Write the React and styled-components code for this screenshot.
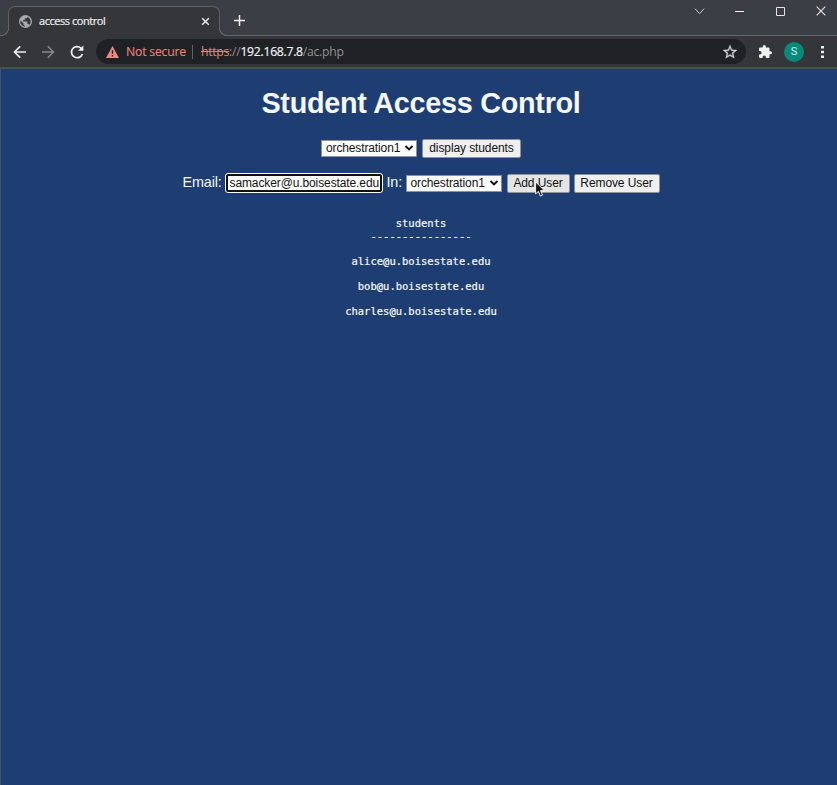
import React from "react";
import styled, { createGlobalStyle } from "styled-components";

const Global = createGlobalStyle`
  * { box-sizing: border-box; }
  body { margin: 0; background: #1e3e73; overflow: hidden; }
`;

const Window = styled.div`
  width: 837px;
  height: 785px;
  display: flex;
  flex-direction: column;
  background: #1e3e73;
  border-left: 1px solid #43546f;
  font-family: "Liberation Sans", Arial, sans-serif;
`;

const TabStrip = styled.div`
  height: 36px;
  flex: none;
  display: flex;
  align-items: flex-end;
  margin-left: -1px;
  padding-left: 8px;
  background: #3b3e45;
  box-shadow: inset 0 -1px #63666b;
`;

const Tab = styled.div`
  position: relative;
  width: 212px;
  height: 30px;
  display: flex;
  align-items: center;
  padding: 0 9px 1px 10px;
  background: #35363a;
  border: 1px solid #5e6166;
  border-bottom: 0;
  border-radius: 7px 7px 0 0;
  &::before, &::after {
    content: "";
    position: absolute;
    bottom: 0;
    width: 8px;
    height: 8px;
  }
  &::before {
    left: -8px;
    background: radial-gradient(circle at 0 0, #3b3e45 6.7px, #63666b 7.2px 7.8px, #35363a 8.3px);
  }
  &::after {
    right: -8px;
    background: radial-gradient(circle at 100% 0, #3b3e45 6.7px, #63666b 7.2px 7.8px, #35363a 8.3px);
  }
`;

const TabTitle = styled.span`
  flex: 1;
  margin-left: 7px;
  font: 11px/16px "Open Sans", sans-serif;
  letter-spacing: -0.45px;
  color: #eeeff1;
  -webkit-text-stroke: 0.2px;
`;

const Glyph = styled.svg`
  display: block;
  flex: none;
  width: ${(p) => p.$w}px;
  height: ${(p) => p.$h || p.$w}px;
  margin-left: ${(p) => p.$ml || 0}px;
  overflow: visible;
`;

const NewTab = styled.div`
  width: 40px;
  height: 36px;
  padding: 15px 0 0 13.5px;
`;

const WindowControls = styled.div`
  margin-left: auto;
  height: 36px;
  display: flex;
  padding: 6px 11px 0 0;
  gap: 30px;
`;

const Toolbar = styled.div`
  height: 33px;
  flex: none;
  display: flex;
  align-items: center;
  margin-left: -1px;
  padding: 0 10px 0 13px;
  background: #35363a;
  border-bottom: 2px solid #47505e;
`;

const Omnibox = styled.div`
  width: 650px;
  height: 25px;
  margin-left: 12px;
  display: flex;
  align-items: center;
  padding: 0 9px 0 10px;
  border-radius: 13px;
  background: #202124;
  font: 12.2px/25px "Open Sans", sans-serif;
  color: #8f9296;
`;

const Security = styled.span`
  width: 59px;
  margin-left: 7px;
  white-space: nowrap;
  color: #e58078;
  letter-spacing: -0.18px;
  -webkit-text-stroke: 0.15px;
`;

const Divider = styled.span`
  width: 1px;
  height: 14px;
  margin: 0 8px 0 7px;
  background: #606367;
`;

const Url = styled.span`
  flex: 1;
  white-space: nowrap;
  letter-spacing: -0.27px;
`;

const Scheme = styled.s`
  color: #e58078;
`;

const Host = styled.span`
  color: #f0f1f2;
  -webkit-text-stroke: 0.2px;
`;

const Avatar = styled.span`
  width: 20px;
  height: 20px;
  margin-left: 12px;
  border-radius: 50%;
  background: #07897b;
  color: #d5f0ec;
  font: 11px/20px Roboto, sans-serif;
  text-align: center;
`;

const Page = styled.main`
  flex: 1;
  display: flex;
  flex-direction: column;
  align-items: center;
  padding-left: 4px;
  color: #f5f8fd;
`;

const Heading = styled.h1`
  margin: 17px 0 0;
  font-size: 28.8px;
  line-height: 34px;
  font-weight: bold;
  letter-spacing: -0.28px;
  white-space: nowrap;
`;

const FormRow = styled.div`
  height: 20px;
  margin-top: ${(p) => p.$top}px;
  display: flex;
  align-items: center;
`;

const Label = styled.label`
  width: ${(p) => p.$w}px;
  padding-bottom: 2px;
  font-size: 14.4px;
  line-height: 18px;
  letter-spacing: -0.15px;
  white-space: nowrap;
`;

const Picker = styled.div`
  width: 96px;
  height: 17px;
  display: flex;
  align-items: center;
  justify-content: space-between;
  padding: 0 3px 0 4px;
  margin-right: 5px;
  border: 1px solid #8b929e;
  background: #fff;
  color: #111;
  font-size: 12px;
  line-height: 15px;
  letter-spacing: -0.13px;
`;

const Button = styled.button`
  width: ${(p) => p.$w}px;
  height: 19px;
  padding: 0;
  margin: 0 ${(p) => p.$gap || 0}px 0 0;
  border: 1px solid #8d929b;
  border-radius: 2px;
  background: ${(p) => (p.$hover ? "#e5e5e5" : "#efefef")};
  color: #111;
  font: 12px/17px "Liberation Sans", Arial, sans-serif;
  letter-spacing: -0.1px;
  white-space: nowrap;
`;

const EmailField = styled.input`
  width: 156px;
  height: 18px;
  margin: 0 5px 0 1px;
  padding: 0 1px 0 2px;
  border: 2px solid #101010;
  border-radius: 2px;
  outline: 1px solid #fff;
  background: #fff;
  color: #111;
  font: 12px/14px "Liberation Sans", Arial, sans-serif;
  letter-spacing: -0.11px;
`;

const StudentList = styled.div`
  margin-top: 24px;
  display: flex;
  flex-direction: column;
  align-items: center;
  font: 10.5px/13px "DejaVu Sans Mono", monospace;
  -webkit-text-stroke: 0.2px;
`;

const Line = styled.div`
  height: 13px;
  margin-top: ${(p) => p.$top || 0}px;
`;

const Pointer = styled.svg`
  position: absolute;
  left: 535px;
  top: 181px;
  width: 11px;
  height: 17px;
`;

const Select = () => (
  <Picker>
    orchestration1
    <Glyph $w={8} $h={6} viewBox="0 0 8 6">
      <path d="M.5 1 4 4.5 7.5 1" fill="none" stroke="#111" strokeWidth="1.9" />
    </Glyph>
  </Picker>
);

export default function App() {
  return (
    <>
      <Global />
      <Window>
        <TabStrip>
          <Tab>
            <Glyph $w={13} viewBox="0 0 24 24">
              <path fill="#a7aaae" d="M12 0a12 12 0 1 0 0 24 12 12 0 0 0 0-24Zm-1.2 21.5A9.6 9.6 0 0 1 2.6 10l5.8 5.7v1.2c0 1.3 1 2.4 2.4 2.4v2.2Zm8.2-3c-.3-1-1.2-1.7-2.3-1.7h-1.2v-3.6c0-.7-.5-1.2-1.2-1.2H7.2V9.6h2.4c.7 0 1.2-.5 1.2-1.2V6h2.4c1.3 0 2.4-1 2.4-2.4v-.5a9.6 9.6 0 0 1 3.4 15.4Z" />
            </Glyph>
            <TabTitle>access control</TabTitle>
            <Glyph $w={9} viewBox="0 0 9 9">
              <path d="m1.2 1.2 6.6 6.6m0-6.6L1.2 7.8" stroke="#eceef0" strokeWidth="1.5" />
            </Glyph>
          </Tab>
          <NewTab>
            <Glyph $w={11} viewBox="0 0 11 11">
              <path d="M5.5 0v11M0 5.5h11" stroke="#edeff1" strokeWidth="1.5" />
            </Glyph>
          </NewTab>
          <WindowControls>
            <Glyph $w={10} viewBox="0 0 10 10">
              <path d="m-1 2.7 4.5 5 4.5-5" fill="none" stroke="#c9cbd0" strokeWidth="1" />
            </Glyph>
            <Glyph $w={10} viewBox="0 0 10 10">
              <path d="M-1 5.5h9" stroke="#f5f5f5" strokeWidth="1" />
            </Glyph>
            <Glyph $w={10} viewBox="0 0 10 10">
              <path d="M.5 1.5h8v8h-8Z" fill="none" stroke="#e5e6e8" strokeWidth="1" />
            </Glyph>
            <Glyph $w={10} viewBox="0 0 10 10">
              <path d="m.7.7 8.6 8.6m0-8.6L.7 9.3" stroke="#e5e6e8" strokeWidth="1.1" />
            </Glyph>
          </WindowControls>
        </TabStrip>
        <Toolbar>
          <Glyph $w={14} viewBox="0 0 14 14">
            <path d="M13 7H2M7.2 1.3 1.5 7l5.7 5.7" fill="none" stroke="#eef0f2" strokeWidth="1.7" />
          </Glyph>
          <Glyph $w={14} $ml={14} viewBox="0 0 14 14">
            <path d="M1 7h11M6.8 1.3 12.5 7l-5.7 5.7" fill="none" stroke="#85878b" strokeWidth="1.6" />
          </Glyph>
          <Glyph $w={14} $ml={15} viewBox="0 0 14 14">
            <path d="M12.4 9A5.6 5.6 0 1 1 11 3.1l1 1" fill="none" stroke="#eef0f2" strokeWidth="1.7" />
            <path d="M13.4.4v5.4H8Z" fill="#eef0f2" />
          </Glyph>
          <Omnibox>
            <Glyph $w={13} $h={12} viewBox="0 0 13 12">
              <path d="M6.5 0 13 12H0Z" fill="#ea8b83" />
              <path d="M6.5 4.2v3.6M6.5 9v1.5" stroke="#252124" strokeWidth="1.4" />
            </Glyph>
            <Security>Not secure</Security>
            <Divider />
            <Url><Scheme>https</Scheme>://<Host>192.168.7.8</Host>/ac.php</Url>
            <Glyph $w={14} viewBox="2 2 20 20">
              <path fill="#cfd1d4" stroke="#cfd1d4" strokeWidth=".5" d="m22 9.24-7.19-.62L12 2 9.19 8.63 2 9.24l5.46 4.73L5.82 21 12 17.27 18.18 21l-1.63-7.03L22 9.24ZM12 15.4l-3.76 2.27 1-4.28-3.32-2.88 4.38-.38L12 6.1l1.71 4.04 4.38.38-3.32 2.88 1 4.28L12 15.4Z" />
            </Glyph>
          </Omnibox>
          <Glyph $w={13} $ml={13} viewBox="2 1 21 21">
            <path fill="#f0f1f3" d="M20.5 11H19V7c0-1.1-.9-2-2-2h-4V3.5a2.5 2.5 0 0 0-5 0V5H4a2 2 0 0 0-2 2v3.8h1.5a2.7 2.7 0 0 1 0 5.4H2V20c0 1.1.9 2 2 2h3.8v-1.5a2.7 2.7 0 0 1 5.4 0V22H17a2 2 0 0 0 2-2v-4h1.5a2.5 2.5 0 0 0 0-5Z" />
          </Glyph>
          <Avatar>S</Avatar>
          <Glyph $w={3} $h={12} $ml={17} viewBox="0 0 3 12">
            <path fill="#edeff1" d="M0 0h3v2.6H0ZM0 4.7h3v2.6H0ZM0 9.4h3V12H0Z" />
          </Glyph>
        </Toolbar>
        <Page>
          <Heading>Student Access Control</Heading>
          <FormRow $top={18}>
            <Select />
            <Button $w={99}>display students</Button>
          </FormRow>
          <FormRow $top={15}>
            <Label $w={42}>Email:</Label>
            <EmailField defaultValue="samacker@u.boisestate.edu" />
            <Label $w={19}>In:</Label>
            <Select />
            <Button $w={63} $gap={4} $hover>Add User</Button>
            <Button $w={86}>Remove User</Button>
          </FormRow>
          <StudentList>
            <Line>students</Line>
            <Line>----------------</Line>
            <Line $top={12}>alice@u.boisestate.edu</Line>
            <Line $top={12}>bob@u.boisestate.edu</Line>
            <Line $top={12}>charles@u.boisestate.edu</Line>
          </StudentList>
        </Page>
      </Window>
      <Pointer viewBox="0 0 12 18">
        <path d="M.7.8v13l3-2.8 2.2 5.2 2.3-1-2.2-5h4.2Z" fill="#111" stroke="#fff" strokeWidth="1" />
      </Pointer>
    </>
  );
}
